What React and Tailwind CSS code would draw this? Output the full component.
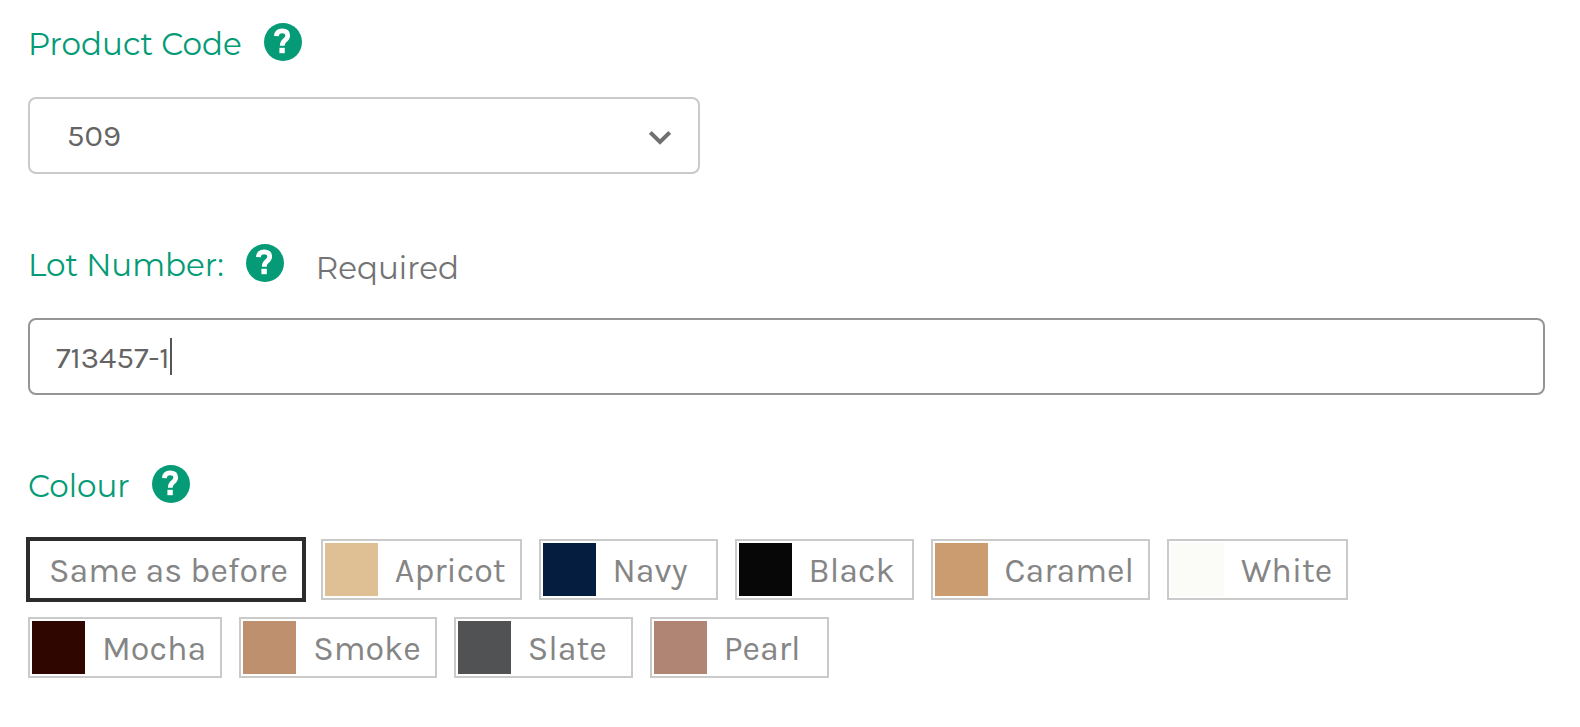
import React, { useState } from "react";

const swatches = [
  { name: "Same as before", bg: "" },
  { name: "Apricot", bg: "bg-[#dfc095]" },
  { name: "Navy", bg: "bg-[#051d3f]" },
  { name: "Black", bg: "bg-[#070707]" },
  { name: "Caramel", bg: "bg-[#cb9c70]" },
  { name: "White", bg: "bg-[#fbfcf8]" },
  { name: "Mocha", bg: "bg-[#2f0700]" },
  { name: "Smoke", bg: "bg-[#be906e]" },
  { name: "Slate", bg: "bg-[#515254]" },
  { name: "Pearl", bg: "bg-[#b08573]" },
];

const HelpButton = ({ topic }) => (
  <button type="button" aria-label={`Help: ${topic}`} className="size-[38px] shrink-0">
    <svg viewBox="0 0 38 38" className="size-full" aria-hidden="true">
      <circle cx="19" cy="19" r="19" fill="#049b76" />
      <path
        d="M12.4 13.200C12.600 9.500 14.600 7.900 18.100 7.900c3.700 0 5.600 1.800 5.600 4.700 0 2.200-1.200 3.500-2.900 4.800-1.700 1.300-2.500 2.200-2.500 5.400"
        fill="none"
        stroke="#fff"
        strokeWidth="4.800"
      />
      <rect x="15.400" y="24.800" width="5.400" height="5.400" fill="#fff" />
    </svg>
  </button>
);

const FieldHeading = ({ as: Tag = "label", topic, children, note, ...rest }) => (
  <div className="flex h-[38px] items-center gap-[22px]">
    <Tag className="pt-1 text-[31px] leading-[38px] font-normal text-[#049b76]" {...rest}>
      {children}
    </Tag>
    <HelpButton topic={topic} />
    {note && (
      <span className="ml-2.5 pt-2.5 text-[31px] leading-[38px] font-normal text-[#737373]">
        {note}
      </span>
    )}
  </div>
);

const App = () => {
  const [code, setCode] = useState("509");
  const [lot, setLot] = useState("713457-1");
  const [colour, setColour] = useState("Same as before");

  return (
    <form className="flex flex-col gap-[70px] bg-white pt-[23px] pr-[35px] pb-12 pl-7 font-['Montserrat','Inter',sans-serif]">
      <div className="flex flex-col gap-9">
        <FieldHeading topic="Product Code" htmlFor="code">
          Product Code
        </FieldHeading>
        <div className="relative w-full max-w-[672px]">
          <select
            id="code"
            value={code}
            onChange={(e) => setCode(e.target.value)}
            className="h-[77px] w-full appearance-none rounded-lg border-2 border-[#cacaca] bg-white pt-0.5 pr-16 pl-[37px] font-['Karla','Inter',sans-serif] text-[31px] text-[#646464] outline-none"
          >
            <option value="509">509</option>
          </select>
          <svg
            viewBox="0 0 22 14"
            className="pointer-events-none absolute top-[34px] right-[29px] h-[14px] w-[22px]"
            aria-hidden="true"
          >
            <path d="M1.300 1.500L11 11L20.700 1.500" fill="none" stroke="#707070" strokeWidth="4" />
          </svg>
        </div>
      </div>

      <div className="flex flex-col gap-9">
        <FieldHeading topic="Lot Number" htmlFor="lot" note="Required">
          Lot Number:
        </FieldHeading>
        {/* invisible copy of the value keeps the drawn caret at its end */}
        <div className="relative">
          <input
            id="lot"
            type="text"
            value={lot}
            onChange={(e) => setLot(e.target.value)}
            className="h-[77px] w-full rounded-lg border-2 border-[#959595] bg-white px-[26px] pt-0.5 font-['Karla','Inter',sans-serif] text-[31px] text-[#646464] caret-transparent outline-none"
          />
          <div
            aria-hidden="true"
            className="pointer-events-none absolute inset-y-0 left-7 flex items-center font-['Karla','Inter',sans-serif] text-[31px]"
          >
            <span className="invisible whitespace-pre">{lot}</span>
            <span className="h-[37px] w-0.5 bg-[#555]" />
          </div>
        </div>
      </div>

      <div className="flex flex-col gap-9">
        <FieldHeading as="span" topic="Colour" id="colour-label">
          Colour
        </FieldHeading>
        <div
          role="group"
          aria-labelledby="colour-label"
          className="flex flex-wrap gap-[17px] font-['Karla','Inter',sans-serif]"
        >
          {swatches.map((s) => (
            <button
              key={s.name}
              type="button"
              aria-pressed={colour === s.name}
              onClick={() => setColour(s.name)}
              className={`flex h-[61px] min-w-[179px] items-center gap-[17px] border-2 p-0.5 pr-3.5 text-[34px] font-normal text-[#858585] ${
                colour === s.name ? "border-[#2d2d2d] ring-2 ring-[#2d2d2d]" : "border-[#cacaca]"
              }`}
            >
              {s.bg ? <span className={`size-[53px] ${s.bg}`} /> : <span />}
              <span className="pt-1">{s.name}</span>
            </button>
          ))}
        </div>
      </div>
    </form>
  );
};

export default App;
